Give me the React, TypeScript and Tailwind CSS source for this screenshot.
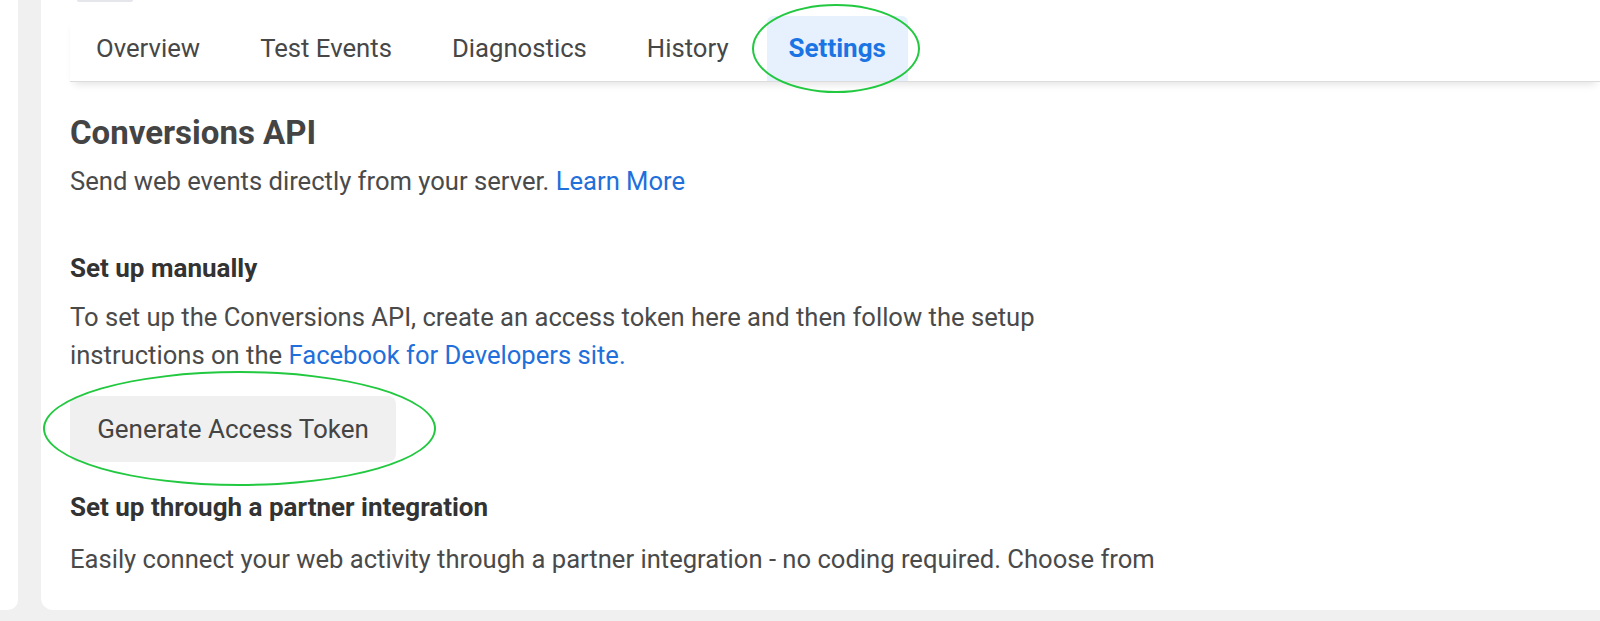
import React from "react";

const tabs = ["Overview", "Test Events", "Diagnostics", "History"];

function Ring({ className }: { className: string }) {
  return <div className={`pointer-events-none absolute rounded-[50%] border-2 border-[#22c940] ${className}`} />;
}

export default function App() {
  return (
    <div className="flex h-[621px] w-[1600px] overflow-hidden bg-[#f0f0f0] font-['Roboto',sans-serif]">
      <div className="h-[610px] w-[18px] shrink-0 rounded-br-[10px] bg-white" />

      <div className="ml-[23px] h-[610px] flex-1 rounded-bl-[12px] bg-white pl-[29px]">
        <div className="ml-[7px] h-[2px] w-[56px] rounded-b-[3px] bg-[#e4e6eb]" />

        <div className="mt-[14px] flex h-[66px] items-stretch border-b border-[#dcdcdc] pl-[4px] shadow-[0_6px_8px_-4px_rgba(0,0,0,0.12)]">
          <div className="flex gap-[16px]">
            {tabs.map((t) => (
              <div key={t} className="flex items-center px-[22px] text-[25.7px] text-[#474747]">
                {t}
              </div>
            ))}
            <div className="relative flex items-center rounded-t-[6px] bg-[#e7f0fd] px-[22px] text-[26px] font-bold text-[#1b74e4]">
              Settings
              <Ring className="-left-[15px] -top-[12px] h-[89px] w-[168px]" />
            </div>
          </div>
        </div>

        <section className="pt-[31px]">
          <h1 className="text-[33px] font-bold leading-[40px] text-[#444]">Conversions API</h1>
          <p className="mt-[11px] text-[25.6px] leading-[34px] text-[#4a4a4a]">
            Send web events directly from your server. <span className="text-[#216fdb]">Learn More</span>
          </p>

          <h2 className="mt-[54px] text-[26px] font-bold leading-[32px] text-[#333]">Set up manually</h2>
          <p className="mt-[14px] max-w-[1060px] text-[25.6px] leading-[38px] text-[#4a4a4a]">
            To set up the Conversions API, create an access token here and then follow the setup instructions on the{" "}
            <span className="text-[#216fdb]">Facebook for Developers site.</span>
          </p>

          <div className="relative mt-[22px] w-[326px]">
            <button className="flex h-[66px] w-[326px] items-center justify-center rounded-[8px] bg-[#f0f0f0] text-[26px] text-[#444]">
              Generate Access Token
            </button>
            <Ring className="-left-[27px] -top-[25px] h-[115px] w-[393px]" />
          </div>

          <h2 className="mt-[29px] text-[26px] font-bold leading-[32px] text-[#333]">Set up through a partner integration</h2>
          <p className="mt-[19px] whitespace-nowrap text-[25.6px] leading-[34px] text-[#4a4a4a]">
            Easily connect your web activity through a partner integration - no coding required. Choose from
          </p>
        </section>
      </div>
    </div>
  );
}
